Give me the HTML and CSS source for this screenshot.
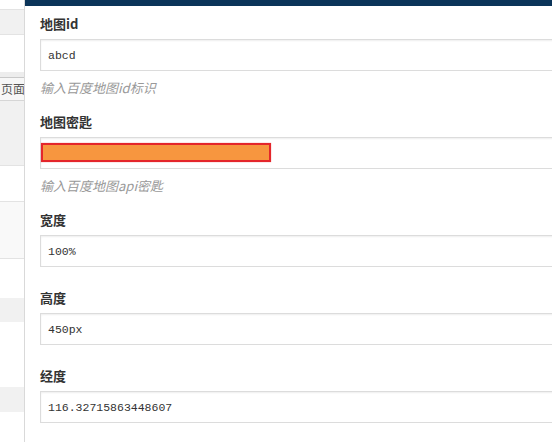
FILE: index.html
```html
<!DOCTYPE html>
<html lang="zh-CN">

<head>
    <meta charset="UTF-8">
    <meta name="viewport" content="width=device-width, initial-scale=1.0">
    <title>地图设置</title>
    <link rel="stylesheet" href="styles.css">
</head>

<body>
    <div class="page">
        <div class="sidebar">
            <div class="row row-a line"></div>
            <div class="row row-b grey line"></div>
            <div class="row row-c"></div>
            <div class="row row-d"></div>
            <div class="row row-btn">页面</div>
            <div class="row row-e grey line"></div>
            <div class="row row-f line"></div>
            <div class="row row-g soft line"></div>
            <div class="row row-h"></div>
            <div class="row row-i grey"></div>
            <div class="row row-j"></div>
            <div class="row row-k grey"></div>
        </div>

        <div class="panel">
            <div class="panel-head"></div>
            <form class="form">
                <div class="group">
                    <label for="map-id">地图id</label>
                    <input type="text" id="map-id" value="abcd" readonly>
                    <p class="hint">输入百度地图id标识</p>
                </div>

                <div class="group">
                    <label for="map-key">地图密匙</label>
                    <div class="masked">
                        <input type="text" id="map-key" value="" readonly>
                        <span class="redact"></span>
                    </div>
                    <p class="hint">输入百度地图api密匙</p>
                </div>

                <div class="group">
                    <label for="map-width">宽度</label>
                    <input type="text" id="map-width" value="100%" readonly>
                </div>

                <div class="group">
                    <label for="map-height">高度</label>
                    <input type="text" id="map-height" value="450px" readonly>
                </div>

                <div class="group">
                    <label for="map-lng">经度</label>
                    <input type="text" id="map-lng" value="116.32715863448607" readonly>
                </div>
            </form>
        </div>
    </div>
</body>

</html>
```

FILE: styles.css
```css
body {
    margin: 0;
    padding: 0;
    overflow: hidden;
    background-color: #fff;
    font-family: "Noto Sans CJK SC", "Liberation Sans", sans-serif;
}

.page {
    display: flex;
    height: 442px;
}

/* left list, mostly hidden behind the panel */
.sidebar {
    width: 24px;
    border-right: 1px solid #d9d9d9;
    display: flex;
    flex-direction: column;
    overflow: hidden;
}

.row {
    box-sizing: border-box;
    flex-shrink: 0;
    background-color: #fff;
}

.row.line {
    border-bottom: 1px solid #e3e3e3;
}

.row.grey {
    background-color: #f1f1f1;
}

.row.soft {
    background-color: #f9f9f9;
}

.row-a { height: 10px; }
.row-b { height: 25px; }
.row-c { height: 37px; }

.row-d {
    height: 5px;
    background-color: #ededed;
}

.row-btn {
    height: 24px;
    border-top: 1px solid #c9c9c9;
    border-bottom: 1px solid #d6d6d6;
    background-color: #f7f7f7;
    color: #555;
    font-size: 12px;
    line-height: 22px;
    padding-left: 1px;
    white-space: nowrap;
}

.row-e { height: 65px; }
.row-f { height: 36px; }
.row-g { height: 57px; }
.row-h { height: 39px; }
.row-i { height: 24px; }
.row-j { height: 65px; }
.row-k { height: 25px; }

.panel {
    flex: 1;
    min-width: 0;
    overflow: hidden;
    background-color: #fff;
}

.panel-head {
    height: 6px;
    background-color: #0b3459;
}

.form {
    margin: 0;
    padding: 8px 0 0 15px;
}

.group {
    margin-bottom: 21px;
}

label {
    display: block;
    height: 20px;
    line-height: 20px;
    margin-bottom: 5px;
    font-size: 13px;
    font-weight: bold;
    color: #333;
}

input[type="text"] {
    display: block;
    box-sizing: border-box;
    width: 620px;
    height: 32px;
    margin: 0;
    padding: 0 7px;
    border: 1px solid #dcdcdc;
    border-radius: 0;
    box-shadow: inset 0 1px 2px rgba(0, 0, 0, 0.07);
    background-color: #fff;
    font-family: "Liberation Mono", monospace;
    font-size: 11.5px;
    color: #333;
    outline: none;
}

.masked {
    position: relative;
}

.redact {
    position: absolute;
    left: 1px;
    top: 6px;
    box-sizing: border-box;
    width: 230px;
    height: 19px;
    background-color: #f7963f;
    border: 2px solid #e4262b;
    box-shadow: 0 0 1px rgba(228, 38, 43, 0.6);
}

.hint {
    margin: 7px 0 -7px;
    line-height: 20px;
    font-size: 13px;
    font-style: italic;
    color: #999;
}
```
